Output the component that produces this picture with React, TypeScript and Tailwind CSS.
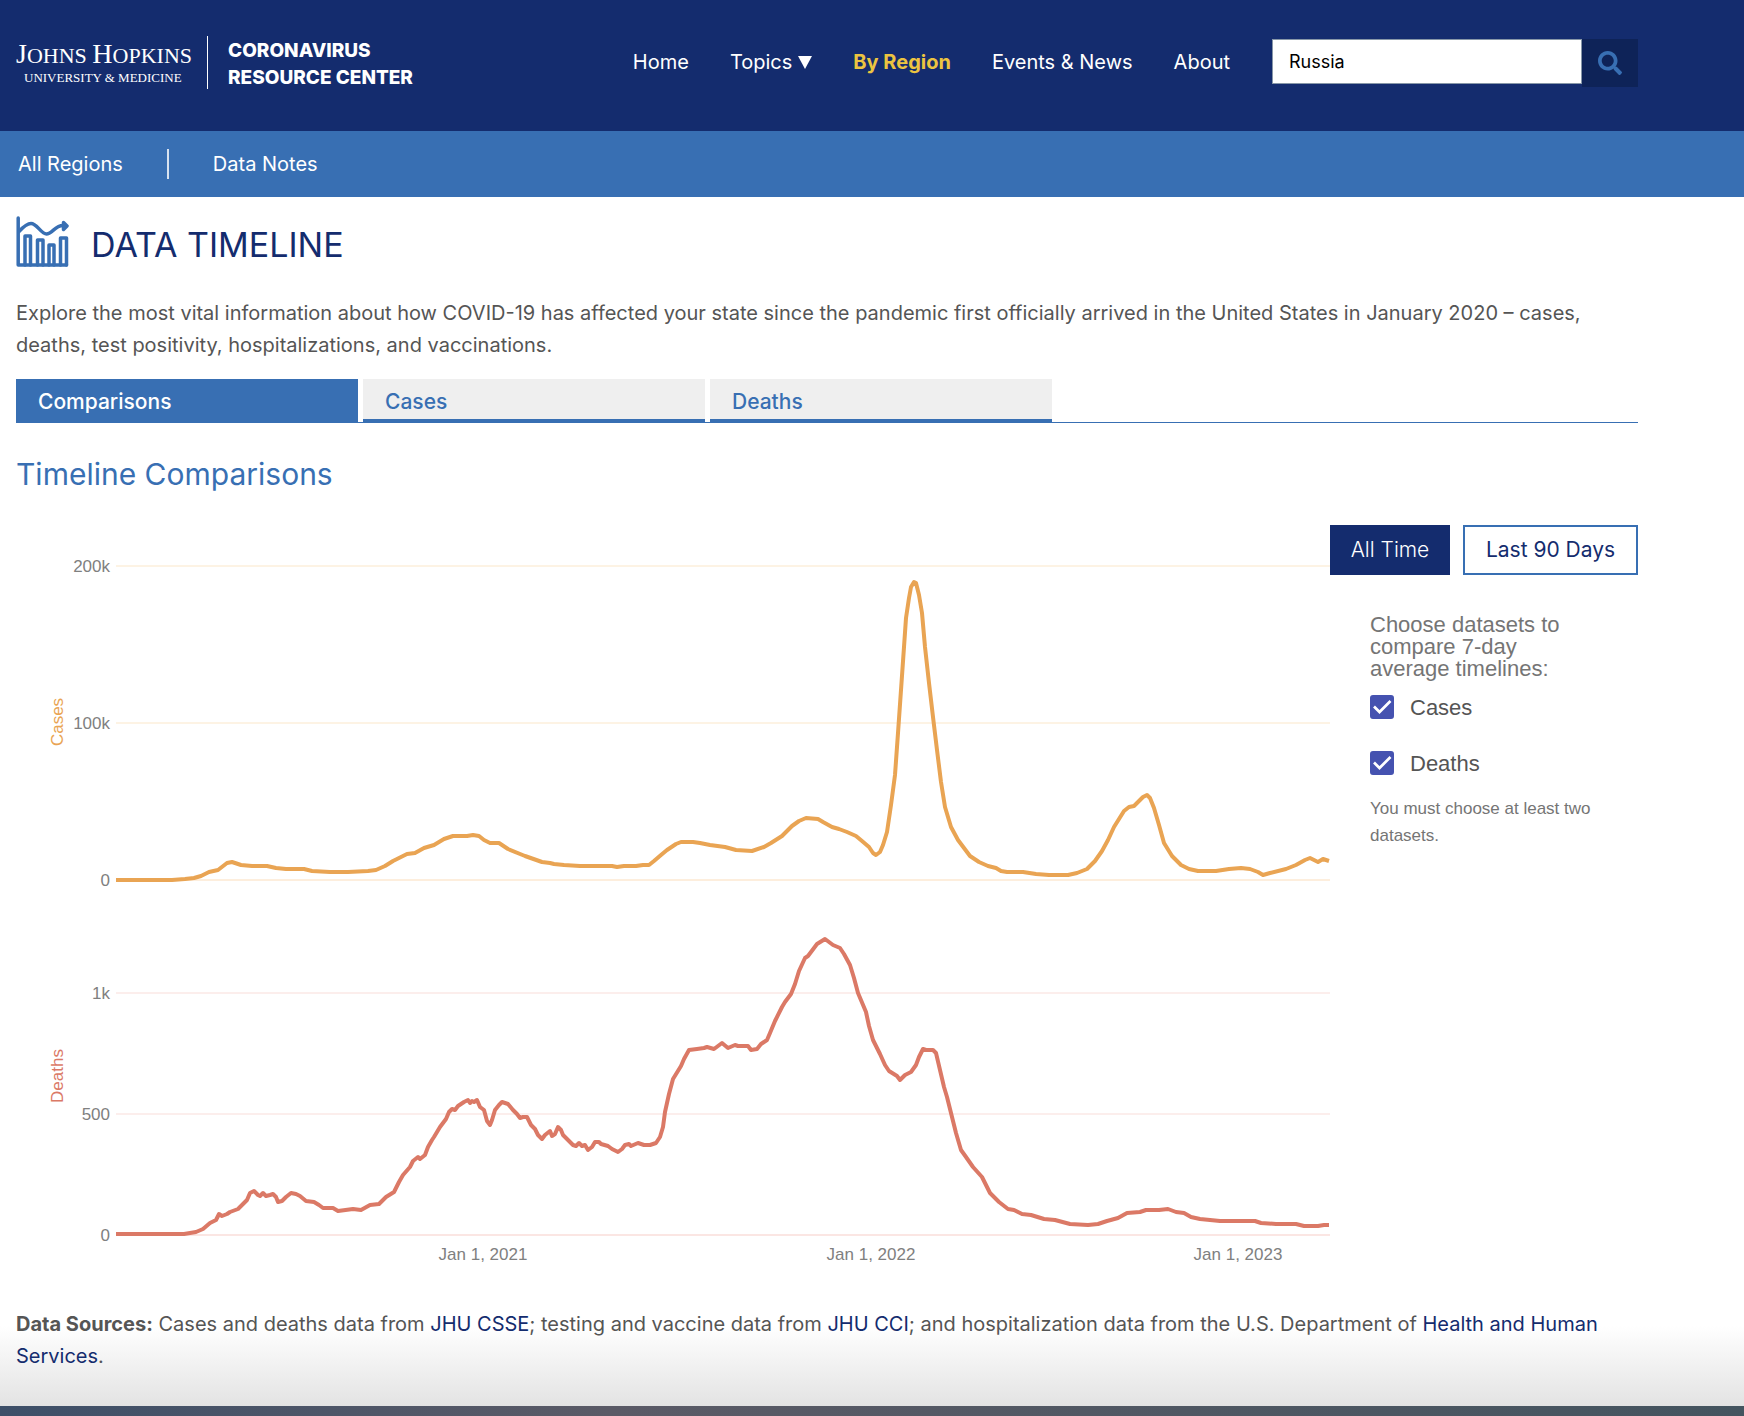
import React, { useState } from "react";
import { FaSearch } from "react-icons/fa";

const navLinks = ["By Region", "Events & News", "About"];
const tabs = ["Comparisons", "Cases", "Deaths"];

const casesLine =
  "116,880 172,880 185,879 194,878 201,876 209,872 218,870 227,863 232,862 241,865 252,866 267,866 276,868 286,869 304,869 312,871 330,872 348,872 368,871 376,870 385,866 393,861 399,858 407,854 415,853 424,848 434,845 444,839 453,836 467,836 473,835 479,836 484,840 490,843 499,843 508,849 525,856 542,862 550,863 554,864 564,865 580,866 612,866 617,867 624,866 636,866 643,865 649,865 654,861 661,855 667,850 676,844 681,842 693,842 700,843 710,845 725,847 736,850 752,851 764,847 771,843 782,836 792,826 799,821 806,818 818,819 823,822 832,827 839,829 847,832 856,836 862,841 869,847 873,853 876,855 880,852 883,845 887,832 891,805 895,775 898,733 901,690 904,647 906,618 909,598 911,587 914,582 916,583 919,595 922,613 925,647 929,683 933,717 937,750 941,782 945,807 951,827 958,840 970,856 979,862 988,866 996,868 1001,871 1007,872 1023,872 1036,874 1049,875 1068,875 1077,873 1087,869 1095,861 1102,851 1108,840 1114,827 1124,811 1129,807 1134,806 1140,800 1143,797 1147,795 1150,798 1154,808 1159,825 1164,843 1172,856 1181,865 1189,869 1198,871 1216,871 1229,869 1241,868 1250,869 1258,872 1263,875 1270,873 1286,869 1296,865 1305,860 1310,858 1314,860 1318,862 1323,859 1329,861";

const deathsLine =
  "116,1234 184,1234 196,1232 203,1229 210,1223 216,1220 219,1214 222,1216 227,1214 230,1212 238,1209 243,1204 247,1200 250,1193 254,1191 258,1195 260,1196 263,1193 266,1196 270,1195 273,1194 276,1197 278,1202 282,1201 286,1197 291,1193 296,1194 300,1196 306,1201 314,1202 319,1205 323,1208 333,1208 338,1211 353,1209 361,1210 370,1205 379,1204 386,1197 394,1192 399,1182 403,1175 410,1167 413,1161 418,1157 420,1159 425,1155 428,1147 432,1140 434,1137 440,1127 446,1119 449,1112 452,1109 455,1110 458,1106 464,1102 468,1100 470,1103 472,1101 474,1102 477,1100 480,1107 484,1110 487,1121 490,1125 492,1120 495,1110 499,1105 502,1102 508,1104 513,1110 517,1114 520,1118 523,1117 527,1117 531,1125 535,1129 538,1135 542,1139 545,1135 550,1131 552,1136 555,1134 558,1127 561,1130 563,1135 569,1141 573,1145 576,1146 579,1143 582,1146 585,1145 588,1150 592,1147 595,1142 599,1142 601,1144 608,1146 612,1149 618,1152 622,1149 625,1145 629,1144 631,1146 638,1143 644,1145 650,1145 656,1143 660,1137 663,1127 665,1112 669,1094 673,1079 681,1066 684,1059 689,1050 697,1049 704,1048 707,1047 714,1049 722,1043 728,1048 735,1045 738,1046 748,1046 751,1050 757,1049 761,1044 767,1040 770,1033 775,1021 782,1007 785,1002 791,994 795,984 799,971 805,958 808,956 817,944 825,939 833,945 840,948 844,954 850,965 854,978 858,993 866,1012 869,1026 873,1040 880,1054 885,1065 889,1071 897,1076 900,1080 905,1075 911,1072 916,1065 919,1057 923,1049 926,1050 933,1050 936,1053 940,1070 944,1087 947,1097 951,1113 956,1133 961,1150 966,1157 973,1167 982,1177 990,1193 999,1202 1008,1209 1014,1210 1022,1214 1031,1215 1044,1219 1055,1220 1070,1224 1088,1225 1098,1224 1107,1221 1118,1218 1127,1213 1140,1212 1146,1210 1159,1210 1168,1209 1176,1212 1184,1213 1191,1217 1200,1219 1210,1220 1220,1221 1235,1221 1255,1221 1261,1223 1276,1224 1296,1224 1304,1226 1318,1226 1324,1225 1329,1225";

const yTicks = [
  { y: 566, label: "200k", color: "#fdf3e4" },
  { y: 723, label: "100k", color: "#fdf3e4" },
  { y: 880, label: "0", color: "#fdeedd" },
  { y: 993, label: "1k", color: "#fceeec" },
  { y: 1114, label: "500", color: "#fceeec" },
  { y: 1235, label: "0", color: "#fbe6e3" },
];

const xTicks = [
  { x: 483, label: "Jan 1, 2021" },
  { x: 871, label: "Jan 1, 2022" },
  { x: 1238, label: "Jan 1, 2023" },
];

function Logo() {
  return (
    <a href="#" className="flex items-center text-white">
      <svg width="179" height="54" viewBox="0 0 179 54" role="img" aria-label="Johns Hopkins University and Medicine" fill="#fff" fontFamily="'Liberation Serif', serif">
        <text x="0" y="27" fontSize="22">
          <tspan fontSize="28">J</tspan>OHNS <tspan fontSize="28">H</tspan>OPKINS
        </text>
        <text x="8" y="46" fontSize="13">UNIVERSITY &amp; MEDICINE</text>
      </svg>
      <span className="ml-3 h-[53px] w-px bg-white" />
      <span className="ml-5 pt-[3px] text-[19px] leading-[27px] font-extrabold">
        CORONAVIRUS
        <br />
        RESOURCE CENTER
      </span>
    </a>
  );
}

function Header() {
  return (
    <header className="bg-[#142c6e] text-white">
      <div className="flex h-[131px] max-w-[1654px] items-start justify-between px-4 pt-[34px]">
        <Logo />
        <div className="flex items-start pt-[5px]">
          <nav className="mr-[42px] flex items-center gap-[41px] text-xl leading-[46px]">
            <a href="#">Home</a>
            <button type="button" className="flex items-center gap-[6px]">
              Topics
              <svg width="14" height="13" viewBox="0 0 14 13" fill="currentColor" aria-hidden="true">
                <path d="M0 0h14L7 13z" />
              </svg>
            </button>
            {navLinks.map((link) => (
              <a key={link} href="#" className={link === "By Region" ? "font-bold text-[#ecc440]" : ""}>
                {link}
              </a>
            ))}
          </nav>
          <form className="flex items-start" onSubmit={(e) => e.preventDefault()}>
            <input
              type="text"
              aria-label="Search"
              defaultValue="Russia"
              className="h-[45px] w-[310px] border border-[#8797a8] bg-white px-4 text-lg text-black"
            />
            <button type="submit" aria-label="Submit search" className="flex h-12 w-14 items-center justify-center bg-[#0e2358] text-[#386fb3]">
              <FaSearch size={24} />
            </button>
          </form>
        </div>
      </div>
    </header>
  );
}

function SubNav() {
  return (
    <nav className="flex h-[66px] items-center bg-[#386fb3] px-[18px] text-xl text-white">
      <a href="#">All Regions</a>
      <span className="mx-11 h-[30px] w-[2px] bg-white/80" />
      <a href="#">Data Notes</a>
    </nav>
  );
}

function TimelineIcon() {
  return (
    <svg width="53" height="52" viewBox="0 0 53 52" fill="none" stroke="#386fb3" strokeWidth="3.5" strokeLinecap="round" strokeLinejoin="round" aria-hidden="true">
      <path d="M2.200 2v47h48.300" />
      <path d="M3 15.500C9 9 12 7.500 15 7.500c6 0 10 10.500 15.500 10.500S39 9.500 47 9.500" />
      <path d="M47.500 6.500l3.500 3.500-3.500 3.500z" fill="#386fb3" />
      <path d="M9 49V20h5.500v29M21.500 49V24h5.500v25M33 49V29h5v20M44.500 49V22h6v27" />
    </svg>
  );
}

function Chart() {
  return (
    <svg viewBox="16 525 1314 750" className="w-full" role="img" aria-label="Daily cases and deaths" fontFamily="'Liberation Sans', sans-serif" fontSize="17">
      {yTicks.map((tick) => (
        <g key={tick.y}>
          <line x1="116" x2="1330" y1={tick.y} y2={tick.y} stroke={tick.color} strokeWidth="2" />
          <text x="110" y={tick.y + 6} textAnchor="end" fill="#808080">{tick.label}</text>
        </g>
      ))}
      {xTicks.map((tick) => (
        <text key={tick.x} x={tick.x} y="1260" textAnchor="middle" fill="#808080">{tick.label}</text>
      ))}
      <text transform="translate(63 722) rotate(-90)" textAnchor="middle" fill="#e9a453">Cases</text>
      <text transform="translate(63 1076) rotate(-90)" textAnchor="middle" fill="#db7966">Deaths</text>
      <polyline points={casesLine} fill="none" stroke="#e9a453" strokeWidth="4" strokeLinejoin="round" />
      <polyline points={deathsLine} fill="none" stroke="#db7966" strokeWidth="4" strokeLinejoin="round" />
    </svg>
  );
}

function DatasetCheckbox({ label }: { label: string }) {
  const [checked, setChecked] = useState(true);

  return (
    <label className="flex h-14 items-center gap-4 text-[22px] text-[#555]">
      <span className="relative flex">
        <input
          type="checkbox"
          checked={checked}
          onChange={() => setChecked(!checked)}
          className="size-6 appearance-none rounded-[3px] border-2 border-[#4552b0] checked:bg-[#4552b0]"
        />
        {checked && (
          <svg viewBox="0 0 24 24" className="pointer-events-none absolute inset-0 size-6" fill="none" stroke="#fff" strokeWidth="2.700" aria-hidden="true">
            <path d="M4 11.500l5.500 5.500L20.500 6" />
          </svg>
        )}
      </span>
      {label}
    </label>
  );
}

function ChartOptions() {
  return (
    <aside className="w-[308px] shrink-0">
      <div className="flex justify-between text-[21px]">
        <button type="button" className="h-[50px] w-[120px] bg-[#142c6e] font-light text-white">All Time</button>
        <button type="button" className="h-[50px] w-[175px] border-2 border-[#386fb3] text-[#142c6e]">Last 90 Days</button>
      </div>
      <fieldset aria-label="Datasets" className="pt-[39px] pl-10 font-['Liberation_Sans',sans-serif]">
        <p className="w-[200px] text-[22px] leading-[22px] text-[#757575]">Choose datasets to compare 7-day average timelines:</p>
        <div className="-mt-px">
          <DatasetCheckbox label="Cases" />
          <DatasetCheckbox label="Deaths" />
        </div>
        <p className="mt-1 text-[17px] leading-[27px] text-[#757575]">You must choose at least two datasets.</p>
      </fieldset>
    </aside>
  );
}

function App() {
  const [active, setActive] = useState("Comparisons");

  return (
    <div className="bg-white font-['Inter',sans-serif] text-[#555]">
      <Header />
      <SubNav />
      <main className="bg-linear-to-t from-[#e3e3e3] to-white to-[80px]">
        <div className="max-w-[1654px] px-4 pb-[34px]">
          <div className="flex items-center gap-[22px] pt-[19px]">
            <TimelineIcon />
            <h1 className="pt-[6px] text-[34px] leading-[46px] text-[#142c6e]">DATA TIMELINE</h1>
          </div>
          <p className="mt-[29px] text-xl leading-8">
            Explore the most vital information about how COVID-19 has affected your state since the pandemic first officially arrived in the United States in January 2020 – cases, deaths, test positivity, hospitalizations, and vaccinations.
          </p>
          <div role="tablist" className="mt-[18px] flex gap-[5px] border-b border-[#386fb3]">
            {tabs.map((tab) => (
              <button
                key={tab}
                type="button"
                role="tab"
                aria-selected={active === tab}
                onClick={() => setActive(tab)}
                className={`h-[43px] w-[342px] border-b-3 border-[#386fb3] px-[22px] pt-[5px] text-left text-[21px] font-medium ${
                  active === tab ? "bg-[#386fb3] text-white" : "bg-[#efefef] text-[#386fb3]"
                }`}
              >
                {tab}
              </button>
            ))}
          </div>
          <h2 className="mt-[31px] text-[30px] leading-10 text-[#386fb3]">Timeline Comparisons</h2>
          <div className="mt-[31px] flex items-start">
            <div className="min-w-0 flex-1">
              <Chart />
            </div>
            <ChartOptions />
          </div>
          <p className="mt-[33px] text-xl leading-8">
            <strong>Data Sources:</strong> Cases and deaths data from <a href="#" className="text-[#142c6e]">JHU CSSE</a>; testing and vaccine data from{" "}
            <a href="#" className="text-[#142c6e]">JHU CCI</a>; and hospitalization data from the U.S. Department of{" "}
            <a href="#" className="text-[#142c6e]">Health and Human Services</a>.
          </p>
        </div>
      </main>
      <footer className="h-[10px] bg-linear-to-r from-[#3d4f68] via-[#5a5a66] via-35% to-[#44545f]" />
    </div>
  );
}

export default App;
